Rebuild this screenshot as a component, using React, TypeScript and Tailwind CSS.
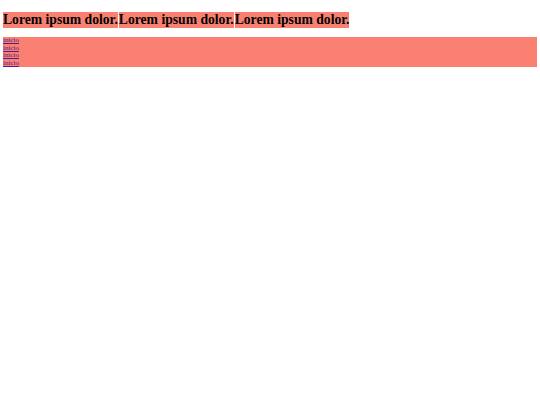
export default function App() {
  return (
    <div className="bg-white w-[540px] h-[405px] px-[3px] pt-[12px]" style={{ fontFamily: '"Liberation Serif", "Times New Roman", serif' }}>
      <div className="flex gap-[1px] items-start">
        <h1 className="bg-[#fa8072] text-black font-bold text-[13.65px] leading-[16px] whitespace-nowrap">Lorem ipsum dolor.</h1>
        <h1 className="bg-[#fa8072] text-black font-bold text-[13.65px] leading-[16px] whitespace-nowrap">Lorem ipsum dolor.</h1>
        <h1 className="bg-[#fa8072] text-black font-bold text-[13.65px] leading-[16px] whitespace-nowrap">Lorem ipsum dolor.</h1>
      </div>
      <nav className="mt-[9px] bg-[#fa8072] flex flex-col h-[30px]">
        <a href="#" className="text-[7px] leading-[7.6px] text-[#551a8b] underline">inicio</a>
        <a href="#" className="text-[7px] leading-[7.6px] text-[#551a8b] underline">inicio</a>
        <a href="#" className="text-[7px] leading-[7.6px] text-[#551a8b] underline">inicio</a>
        <a href="#" className="text-[7px] leading-[7.6px] text-[#551a8b] underline">inicio</a>
      </nav>
    </div>
  );
}
